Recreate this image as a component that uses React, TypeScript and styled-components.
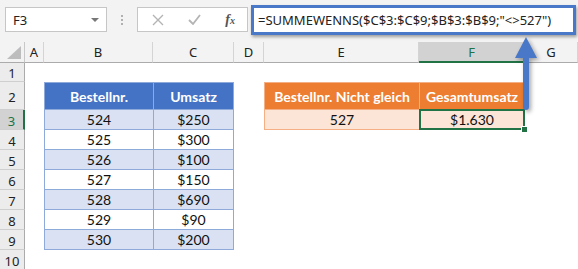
import styled, { createGlobalStyle, css } from "styled-components";

const GlobalStyle = createGlobalStyle`
  html, body {
    margin: 0;
    padding: 0;
    background: #ffffff;
  }
  body {
    font-family: "Lato", "Liberation Sans", sans-serif;
  }
`;

const GREEN = "#217346";

type Row = { id: number; sales: string };

const orders: Row[] = [
  { id: 524, sales: "$250" },
  { id: 525, sales: "$300" },
  { id: 526, sales: "$100" },
  { id: 527, sales: "$150" },
  { id: 528, sales: "$690" },
  { id: 529, sales: "$90" },
  { id: 530, sales: "$200" },
];

const columns = ["A", "B", "C", "D", "E", "F", "G"];

const App = () => {
  return (
    <>
      <GlobalStyle />
      <Window>
        <Toolbar>
          <NameBox>
            <span>F3</span>
            <Caret />
          </NameBox>
          <Grip>
            <i />
            <i />
            <i />
          </Grip>
          <FxButtons>
            <svg width="12" height="12" viewBox="0 0 12 12">
              <path d="M1 1 L11 11 M11 1 L1 11" stroke="#b4b4b4" strokeWidth="1.4" fill="none" />
            </svg>
            <svg width="13" height="11" viewBox="0 0 13 11">
              <path d="M1 6 L5 10 L12 1" stroke="#b4b4b4" strokeWidth="1.8" fill="none" />
            </svg>
            <FxLabel>
              f<sub>x</sub>
            </FxLabel>
          </FxButtons>
          <FormulaBar>=SUMMEWENNS($C$3:$C$9;$B$3:$B$9;"&lt;&gt;527")</FormulaBar>
        </Toolbar>

        <Sheet>
          <Corner>
            <svg width="14" height="13" viewBox="0 0 14 13">
              <polygon points="14,0 14,13 0,13" fill="#bdbdbd" />
            </svg>
          </Corner>
          {columns.map((c) => (
            <ColHead key={c} $active={c === "F"}>
              {c}
            </ColHead>
          ))}

          {Array.from({ length: 10 }, (_, i) => (
            <RowHead key={i} $row={i + 2} $active={i + 1 === 3}>
              {i + 1}
            </RowHead>
          ))}

          <BlueHead $col={3} $row={3}>Bestellnr.</BlueHead>
          <BlueHead $col={4} $row={3} $last>
            Umsatz
          </BlueHead>
          {orders.map((o, i) => (
            <div key={o.id} style={{ display: "contents" }}>
              <BlueCell $col={3} $row={i + 4} $band={i % 2 === 0}>
                {o.id}
              </BlueCell>
              <BlueCell $col={4} $row={i + 4} $band={i % 2 === 0} $last>
                {o.sales}
              </BlueCell>
            </div>
          ))}

          <OrangeHead $col={6} $row={3}>Bestellnr. Nicht gleich</OrangeHead>
          <OrangeHead $col={7} $row={3} $last>
            Gesamtumsatz
          </OrangeHead>
          <OrangeCell $col={6} $row={4}>527</OrangeCell>
          <OrangeCell $col={7} $row={4} $last $selected>
            $1.630
          </OrangeCell>
        </Sheet>

        <Arrow width="30" height="80" viewBox="0 0 30 80">
          <path
            d="M12 0 L23 21 L15 21 L15 70 Q15 73 12 73 Q9 73 9 70 L9 21 L1 21 Z"
            fill="#4a78c8"
          />
        </Arrow>
      </Window>
    </>
  );
};

const Window = styled.div`
  position: relative;
  width: 578px;
  height: 269px;
  overflow: hidden;
  background: #ffffff;
`;

const Toolbar = styled.div`
  height: 42px;
  box-sizing: border-box;
  padding: 0 0 3px 5px;
  display: flex;
  align-items: center;
  background: #f3f3f3;
  font-family: "Noto Sans", "Liberation Sans", sans-serif;
`;

const NameBox = styled.div`
  width: 102px;
  height: 25px;
  box-sizing: border-box;
  background: #fff;
  border: 1px solid #c6c6c6;
  display: flex;
  align-items: center;
  justify-content: space-between;
  padding: 0 7px 0 7px;
  font-size: 13px;
  color: #222;
`;

const Caret = styled.span`
  width: 0;
  height: 0;
  border-left: 4px solid transparent;
  border-right: 4px solid transparent;
  border-top: 4px solid #777;
`;

const Grip = styled.div`
  width: 30px;
  display: flex;
  flex-direction: column;
  align-items: center;
  gap: 2px;
  i {
    width: 2px;
    height: 2px;
    background: #b0b0b0;
  }
`;

const FxButtons = styled.div`
  width: 111px;
  height: 25px;
  box-sizing: border-box;
  background: #fff;
  border: 1px solid #c6c6c6;
  display: flex;
  align-items: center;
  justify-content: space-between;
  padding: 0 12px 0 14px;
`;

const FxLabel = styled.span`
  font-family: "Liberation Serif", serif;
  font-style: italic;
  font-weight: bold;
  font-size: 14px;
  color: #555;
  sub {
    font-size: 10px;
    vertical-align: 0;
  }
`;

const FormulaBar = styled.div`
  flex: 1;
  height: 30px;
  box-sizing: border-box;
  margin: 0 2px 0 3px;
  border: 3px solid #4a78c8;
  background: #fff;
  box-shadow: 1px 2px 3px rgba(0, 0, 0, 0.35);
  display: flex;
  align-items: center;
  padding-left: 4px;
  font-size: 13px;
  color: #222;
  white-space: nowrap;
  overflow: hidden;
`;

const Sheet = styled.div`
  display: grid;
  grid-template-columns: 25px 19px 109px 81px 30px 155px 106px 1fr;
  grid-template-rows: 21px 19px 28px repeat(8, 20px);
  font-family: "Lato", "Liberation Sans", sans-serif;
`;

const headBase = css`
  box-sizing: border-box;
  display: flex;
  align-items: center;
  justify-content: center;
  font-family: "Noto Sans", "Liberation Sans", sans-serif;
  font-size: 13px;
  color: #222;
`;

const Corner = styled.div`
  ${headBase};
  background: #f3f3f3;
  border-right: 1px solid #c8c8c8;
  border-bottom: 1px solid #ababab;
  justify-content: flex-end;
  align-items: flex-end;
  padding: 0 3px 3px 0;
`;

const ColHead = styled.div<{ $active?: boolean }>`
  ${headBase};
  background: #f3f3f3;
  border-right: 1px solid #d4d4d4;
  border-bottom: 1px solid #ababab;
  ${(p) =>
    p.$active &&
    css`
      background: #d2d2d2;
      color: ${GREEN};
      border-bottom: 2px solid ${GREEN};
    `}
`;

const RowHead = styled.div<{ $row: number; $active?: boolean }>`
  ${headBase};
  grid-column: 1;
  grid-row: ${(p) => p.$row};
  background: #ececec;
  border-right: 1px solid #ababab;
  border-bottom: 1px solid #cfcfcf;
  padding-top: 2px;
  ${(p) =>
    p.$active &&
    css`
      background: #d2d2d2;
      color: ${GREEN};
      border-right: 2px solid ${GREEN};
    `}
`;

type CellProps = { $col: number; $row: number; $last?: boolean };

const cellBase = css<CellProps>`
  grid-column: ${(p) => p.$col};
  grid-row: ${(p) => p.$row};
  box-sizing: border-box;
  display: flex;
  align-items: center;
  justify-content: center;
  font-size: 14px;
  color: #111;
`;

const BlueHead = styled.div<CellProps>`
  ${cellBase};
  background: #4472c4;
  color: #fff;
  font-weight: bold;
  border: 1px solid #8eaadb;
  ${(p) => !p.$last && "border-right: none;"}
`;

const BlueCell = styled.div<CellProps & { $band: boolean }>`
  ${cellBase};
  background: ${(p) => (p.$band ? "#d9e1f2" : "#ffffff")};
  border-left: 1px solid #8eaadb;
  border-bottom: 1px solid #8eaadb;
  ${(p) => p.$last && "border-right: 1px solid #8eaadb;"}
`;

const OrangeHead = styled.div<CellProps>`
  ${cellBase};
  background: #ed7d31;
  color: #fff;
  font-weight: bold;
  border: 1px solid #f4b084;
  ${(p) => !p.$last && "border-right: none;"}
`;

const OrangeCell = styled.div<CellProps & { $selected?: boolean }>`
  ${cellBase};
  position: relative;
  background: #fce4d6;
  border-left: 1px solid #f4b084;
  border-bottom: 1px solid #f4b084;
  ${(p) => p.$last && "border-right: 1px solid #f4b084;"}
  ${(p) =>
    p.$selected &&
    css`
      &::before {
        content: "";
        position: absolute;
        left: -1px;
        top: -1px;
        right: -1px;
        bottom: -1px;
        border: 2px solid ${GREEN};
      }
      &::after {
        content: "";
        position: absolute;
        right: -3px;
        bottom: -3px;
        width: 5px;
        height: 5px;
        background: ${GREEN};
        border: 1px solid #fff;
        border-right: none;
        border-bottom: none;
      }
    `}
`;

const Arrow = styled.svg`
  position: absolute;
  left: 514px;
  top: 37px;
  filter: drop-shadow(2px 2px 2px rgba(0, 0, 0, 0.35));
  overflow: visible;
`;

export default App;
